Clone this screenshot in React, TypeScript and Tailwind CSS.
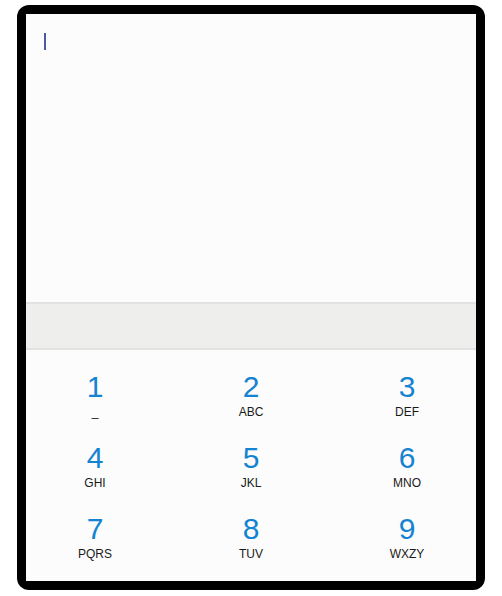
import React from "react";

const keys: [string, string][] = [
  ["1", "_"],
  ["2", "ABC"],
  ["3", "DEF"],
  ["4", "GHI"],
  ["5", "JKL"],
  ["6", "MNO"],
  ["7", "PQRS"],
  ["8", "TUV"],
  ["9", "WXZY"],
];

export default function App() {
  const rows = [keys.slice(0, 3), keys.slice(3, 6), keys.slice(6, 9)];
  return (
    <div className="w-[502px] h-[596px] bg-white pt-[5px] pl-[17px]" style={{ fontFamily: '"Liberation Sans", Arial, sans-serif' }}>
      <div className="w-[468px] h-[585px] bg-black rounded-[12px] p-[9px]">
        <div className="w-full h-full bg-[#fcfcfc] flex flex-col overflow-hidden">
          <div className="h-[288px] shrink-0 pt-[19px] pl-[18px]">
            <div className="w-[2px] h-[17px] bg-[#4b5aa3]" />
          </div>
          <div className="h-[48px] shrink-0 bg-[#eeeeed] border-y-2 border-[#e2e2e2]" />
          <div className="shrink-0 pt-[22px] px-[19px] flex flex-col">
            {rows.map((row, i) => (
              <div key={i} className="h-[71px] shrink-0 flex justify-between">
                {row.map(([d, l]) => (
                  <div key={d} className="w-[100px] flex flex-col items-center">
                    <div className="text-[30px] leading-[30px] text-[#1483d1]">{d}</div>
                    <div className="mt-[4px] text-[12px] leading-[12px] text-[#1a1a1a]">{l}</div>
                  </div>
                ))}
              </div>
            ))}
          </div>
        </div>
      </div>
    </div>
  );
}
